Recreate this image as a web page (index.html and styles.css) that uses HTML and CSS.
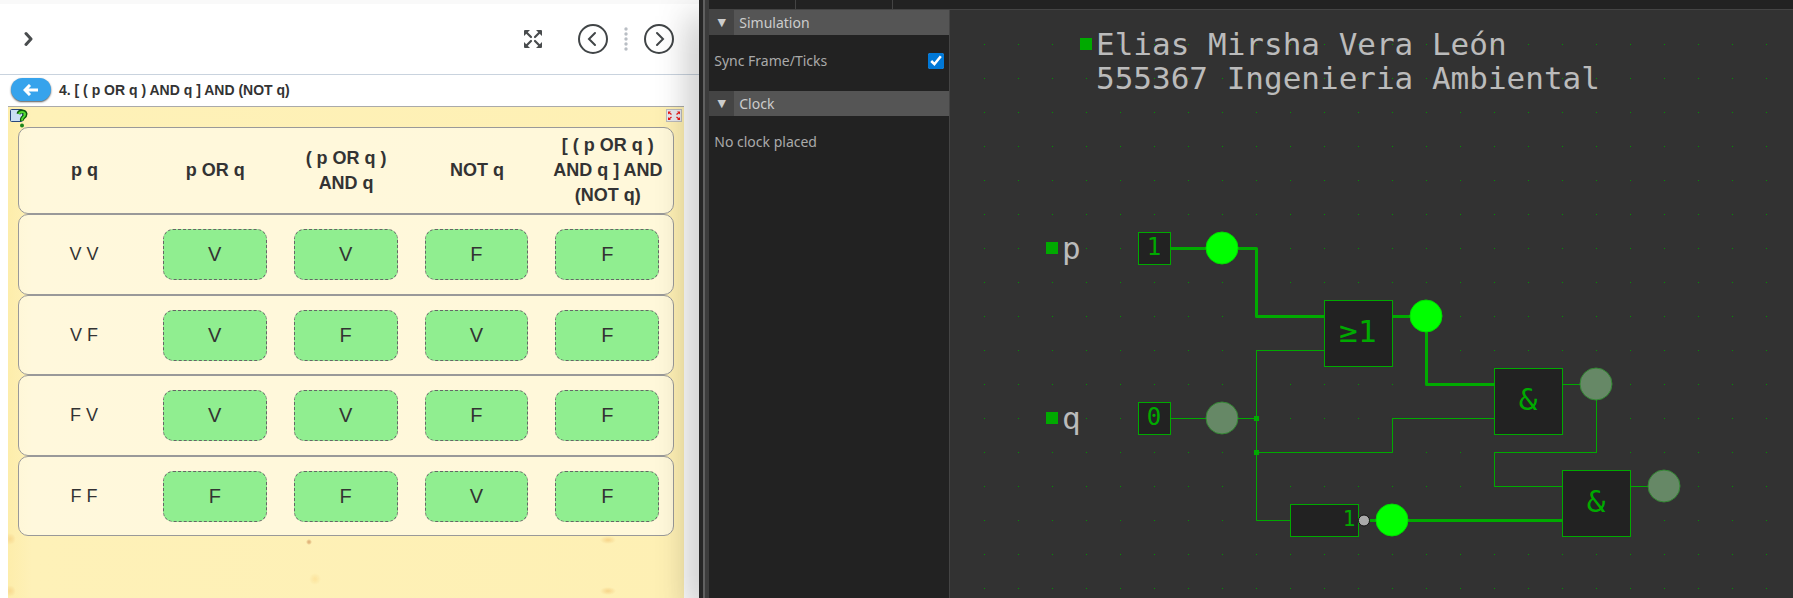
FILE: index.html
```html
<!DOCTYPE html>
<html lang="es">
<head>
<meta charset="utf-8">
<title>Tabla de verdad y circuito</title>
<link rel="stylesheet" href="styles.css">
</head>
<body>
<div class="workspace">
  <main class="lesson">
    <header class="toolbar">
      <button class="icon-button" aria-label="Abrir menú">
        <svg width="10" height="16" viewBox="0 0 10 16"><path d="M2 2.500L7 8l-5 5.500" fill="none" stroke="#494c4e" stroke-width="3" stroke-linecap="round" stroke-linejoin="round"/></svg>
      </button>
      <div class="toolbar-actions">
        <button class="icon-button expand" aria-label="Pantalla completa">
          <svg width="18" height="18" viewBox="0 0 18 18"><path d="M0 1q0-1 1-1h5L0 6zM18 1q0-1-1-1h-5l6 6zM0 17q0 1 1 1h5l-6-6zM18 17q0 1-1 1h-5l6-6z" fill="#494c4e"/><path d="M2 2l5 5M16 2l-5 5M2 16l5-5M16 16l-5-5" stroke="#494c4e" stroke-width="2.200" stroke-linecap="round"/></svg>
        </button>
        <button class="icon-button" aria-label="Anterior">
          <svg width="30" height="30" viewBox="0 0 30 30" fill="none" stroke="#414547" stroke-width="2"><circle cx="15" cy="15" r="14"/><path d="M17 9l-6 6 6 6" stroke-linecap="round"/></svg>
        </button>
        <svg class="dots" width="4" height="24" viewBox="0 0 4 24" fill="#b9bec4"><circle cx="2" cy="2" r="1.700"/><circle cx="2" cy="7" r="1.700"/><circle cx="2" cy="12" r="1.700"/><circle cx="2" cy="17" r="1.700"/><circle cx="2" cy="22" r="1.700"/></svg>
        <button class="icon-button" aria-label="Siguiente">
          <svg width="30" height="30" viewBox="0 0 30 30" fill="none" stroke="#414547" stroke-width="2"><circle cx="15" cy="15" r="14"/><path d="M13 9l6 6-6 6" stroke-linecap="round"/></svg>
        </button>
      </div>
    </header>
    <div class="title-row">
      <button class="back" aria-label="Volver">
        <svg width="16" height="12" viewBox="0 0 16 12"><path d="M7 1L2 6l5 5M2 6h13" fill="none" stroke="#fff" stroke-width="3"/></svg>
      </button>
      <h1 class="title">4. [ ( p OR q ) AND q ] AND (NOT q)</h1>
    </div>
    <section class="sheet">
      <div class="sheet-bar">
        <button class="icon-button" aria-label="Ayuda">
          <svg width="18" height="19" viewBox="0 0 18 19"><rect x=".5" y=".5" width="12" height="12" rx="1" fill="#c9dff3" stroke="#28467c"/><path d="M8.500 5q.5-2.500 3.500-2.500T15.500 5q0 2-2 3.200T12 12" fill="none" stroke="#0a5a0a" stroke-width="4"/><path d="M9 5q.5-2 3-2t3 2q0 2-1.500 3T12 11.500" fill="none" stroke="#55db35" stroke-width="2"/><circle cx="12" cy="16.500" r="2" fill="#1d871b"/></svg>
        </button>
        <button class="icon-button" aria-label="Maximizar">
          <svg width="16" height="13" viewBox="0 0 16 13"><rect x=".5" y=".5" width="15" height="12" fill="#e9e9ee" stroke="#bbb"/><path d="M2 2.500h3L2 5.500zM14 2.500h-3l3 3zM2 11h3L2 8zM14 11h-3l3-3z" fill="#e81818"/><path d="M3 3.500l2.500 2M13 3.500l-2.500 2M3 10l2.500-2M13 10l-2.500-2" stroke="#e81818" stroke-width="1.300"/></svg>
        </button>
      </div>
      <table class="truth">
        <thead>
          <tr><th>p q</th><th>p OR q</th><th>( p OR q ) AND q</th><th>NOT q</th><th>[ ( p OR q ) AND q ] AND (NOT q)</th></tr>
        </thead>
        <tbody>
          <tr><td>V V</td><td><span class="chip">V</span></td><td><span class="chip">V</span></td><td><span class="chip">F</span></td><td><span class="chip">F</span></td></tr>
          <tr><td>V F</td><td><span class="chip">V</span></td><td><span class="chip">F</span></td><td><span class="chip">V</span></td><td><span class="chip">F</span></td></tr>
          <tr><td>F V</td><td><span class="chip">V</span></td><td><span class="chip">V</span></td><td><span class="chip">F</span></td><td><span class="chip">F</span></td></tr>
          <tr><td>F F</td><td><span class="chip">F</span></td><td><span class="chip">F</span></td><td><span class="chip">V</span></td><td><span class="chip">F</span></td></tr>
        </tbody>
      </table>
    </section>
  </main>
  <div class="splitter"></div>
  <div class="simulator">
    <div class="tabs"><span class="tab tab-first"></span><span class="tab tab-second"></span></div>
    <div class="sim-body">
      <aside class="sidebar">
        <button class="panel-head"><span class="fold">▼</span><span class="panel-name">Simulation</span></button>
        <div class="panel">
          <label for="sync">Sync Frame/Ticks</label>
          <input class="check" type="checkbox" id="sync" checked>
        </div>
        <button class="panel-head"><span class="fold">▼</span><span class="panel-name">Clock</span></button>
        <div class="panel">No clock placed</div>
      </aside>
      <svg class="canvas" role="img" aria-label="Circuito lógico">
        <defs>
          <pattern id="grid" x="34" y="34" width="34" height="34" patternUnits="userSpaceOnUse"><rect width="1" height="1" fill="#009600"/></pattern>
        </defs>
        <rect x="34" y="34" width="100%" height="100%" fill="url(#grid)"/>
        <g transform="translate(-950 -10)">
          <g class="marks"><rect x="1080" y="38" width="12" height="12"/><rect x="1046" y="242" width="12" height="12"/><rect x="1046" y="412" width="12" height="12"/><rect x="1254" y="416" width="5" height="5"/><rect x="1254" y="450" width="5" height="5"/></g>
          <g class="note">
            <text x="1096" y="55">Elias Mirsha Vera León</text>
            <text x="1096" y="89">555367 Ingenieria Ambiental</text>
            <text x="1062" y="259">p</text>
            <text x="1062" y="429">q</text>
          </g>
          <path class="wire on" d="M1171 248.500H1256.500V316.500H1324M1393 316.500H1426.500V384.500H1494M1369 520.500H1562"/>
          <path class="wire" d="M1171 418.500H1256.500M1324 350.500H1256.500V520.500H1290M1256.500 452.500H1392.500V418.500H1494M1563 384.500H1596.500V452.500H1494.500V486.500H1562M1631 486.500H1664"/>
          <g class="gate">
            <rect x="1138.500" y="232.500" width="32" height="32"/>
            <rect x="1138.500" y="402.500" width="32" height="32"/>
            <rect x="1324.500" y="300.500" width="68" height="66"/>
            <rect x="1494.500" y="368.500" width="68" height="66"/>
            <rect x="1562.500" y="470.500" width="68" height="66"/>
            <rect x="1290.500" y="504.500" width="68" height="32"/>
          </g>
          <g class="symbol">
            <text class="digit" x="1154" y="255">1</text>
            <text class="digit" x="1154" y="425">0</text>
            <text x="1358" y="342">≥1</text>
            <text x="1528" y="410">&amp;</text>
            <text x="1596" y="512">&amp;</text>
            <text class="small" x="1349" y="526">1</text>
          </g>
          <circle class="bubble" cx="1364" cy="520.500" r="5.500"/>
          <g class="led on"><circle cx="1222" cy="248" r="16"/><circle cx="1426" cy="316" r="16"/><circle cx="1392" cy="520" r="16"/></g>
          <g class="led"><circle cx="1222" cy="418" r="16"/><circle cx="1596" cy="384" r="16"/><circle cx="1664" cy="486" r="16"/></g>
        </g>
      </svg>
    </div>
  </div>
</div>
</body>
</html>
```
FILE: styles.css
```css
* { box-sizing: border-box; }
body { margin: 0; background: #323232; font-family: "Liberation Sans", Arial, sans-serif; }
button { border: 0; padding: 0; background: none; font: inherit; color: inherit; cursor: pointer; }
svg { display: block; }

.workspace { display: grid; grid-template-columns: 39% 10px 1fr; height: 100vh; overflow: hidden; }

/* Lesson pane */
.lesson { display: flex; flex-direction: column; min-width: 0; background: #fff; color: #333; border-top: 4px solid #f9f9f9; }
.toolbar { display: flex; align-items: center; justify-content: space-between; height: 71px; padding: 0 25px 0 24px; border-bottom: 1px solid #c9d3de; }
.toolbar-actions { display: flex; align-items: center; gap: 16px; }
.expand { margin-right: 20px; }
.title-row { display: flex; align-items: center; gap: 8px; height: 31px; padding: 0 0 2px 11px; }
.back { display: grid; place-items: center; width: 40px; height: 23px; border-radius: 12px; background: #36a3ec; box-shadow: 0 1px 2px #555; }
.title { margin: 0; font-size: 14px; line-height: 20px; }

.sheet {
  flex: 1;
  margin: 0 15px 0 8px;
  padding: 0 10px;
  border-top: 1px solid #aaa;
  background:
    radial-gradient(circle at 301px 435px, #e2b67c 0 1px, transparent 3px),
    radial-gradient(circle at 2px 432px, #f8dc94 0 1px, transparent 6px),
    radial-gradient(circle at 2px 484px, #f8dc94 0 1px, transparent 6px),
    radial-gradient(8px 4px at 600px 433px, #f6d48a, transparent),
    radial-gradient(8px 4px at 600px 484px, #f6d48a, transparent),
    radial-gradient(circle at 307px 472px, #fce5a0 0 1px, transparent 6px),
    linear-gradient(to right, #fdedab, #fef1b8 24px, #fef0b4);
}
.sheet-bar { display: flex; justify-content: space-between; height: 20px; padding-top: 2px; margin: 0 -8px; align-items: flex-start; }

.truth { display: block; font-size: 18px; line-height: 25px; text-align: center; }
.truth thead, .truth tbody { display: block; }
.truth tr { display: grid; grid-template-columns: repeat(5, 1fr); align-items: center; min-height: 80px; border: 1px solid #999; border-radius: 10px; background: rgba(255, 255, 255, .5); }
.truth tbody tr:nth-child(odd) { min-height: 81px; }
.truth thead tr { min-height: 87px; }
.truth th { padding: 4px 8px; }
.truth td { padding: 0 14px 0 13px; }
.chip { display: grid; place-items: center; height: 51px; border: 1px dashed #666; border-radius: 10px; background: #90ee90; font-size: 20px; }

/* Divider between panes; its shadow falls on the lesson */
.splitter { position: relative; border-left: 4px solid #262626; border-right: 4px solid #3c3c3c; background: #606060; box-shadow: 0 16px 36px rgba(0, 0, 0, .7); }

/* Simulator pane */
.simulator { position: relative; display: flex; flex-direction: column; min-width: 0; background: #323232; color: #aaa; font-family: "Noto Sans", "Open Sans", sans-serif; font-size: 14px; }
.tabs { display: flex; height: 10px; background: #222; border-bottom: 1px solid #444; }
.tab { border-right: 1px solid #444; }
.tab-first { width: 87px; }
.tab-second { width: 97px; }
.sim-body { display: flex; flex: 1; min-height: 0; }
.sidebar { width: 241px; background: #222; border-right: 1px solid #444; }
.panel-head { display: flex; width: 100%; height: 25px; line-height: 25px; background: #555; color: #ccc; text-align: left; }
.fold { width: 25px; background: #444; text-align: center; font-family: "DejaVu Sans", sans-serif; font-size: 11px; }
.panel-name { padding-left: 5px; }
.panel { display: flex; align-items: center; justify-content: space-between; height: 56px; padding: 0 5px 5px; }
.check { width: 16px; height: 16px; margin: 0; accent-color: #0078d7; }

.canvas { flex: 1; min-width: 0; height: 100%; font-family: "DejaVu Sans Mono", monospace; font-size: 31px; }
.marks { fill: #00aa00; }
.note { fill: #bbb; }
.wire { fill: none; stroke: #00aa00; }
.wire.on { stroke-width: 3; stroke-linejoin: round; }
.gate { fill: #222; stroke: #00aa00; }
.symbol { fill: #00aa00; text-anchor: middle; }
.digit { font-size: 24px; }
.small { font-size: 21px; }
.bubble { fill: #aaa; stroke: #111; }
.led { fill: #668866; stroke: #338833; }
.led.on { fill: #00ff00; stroke: #00dd00; }
```
